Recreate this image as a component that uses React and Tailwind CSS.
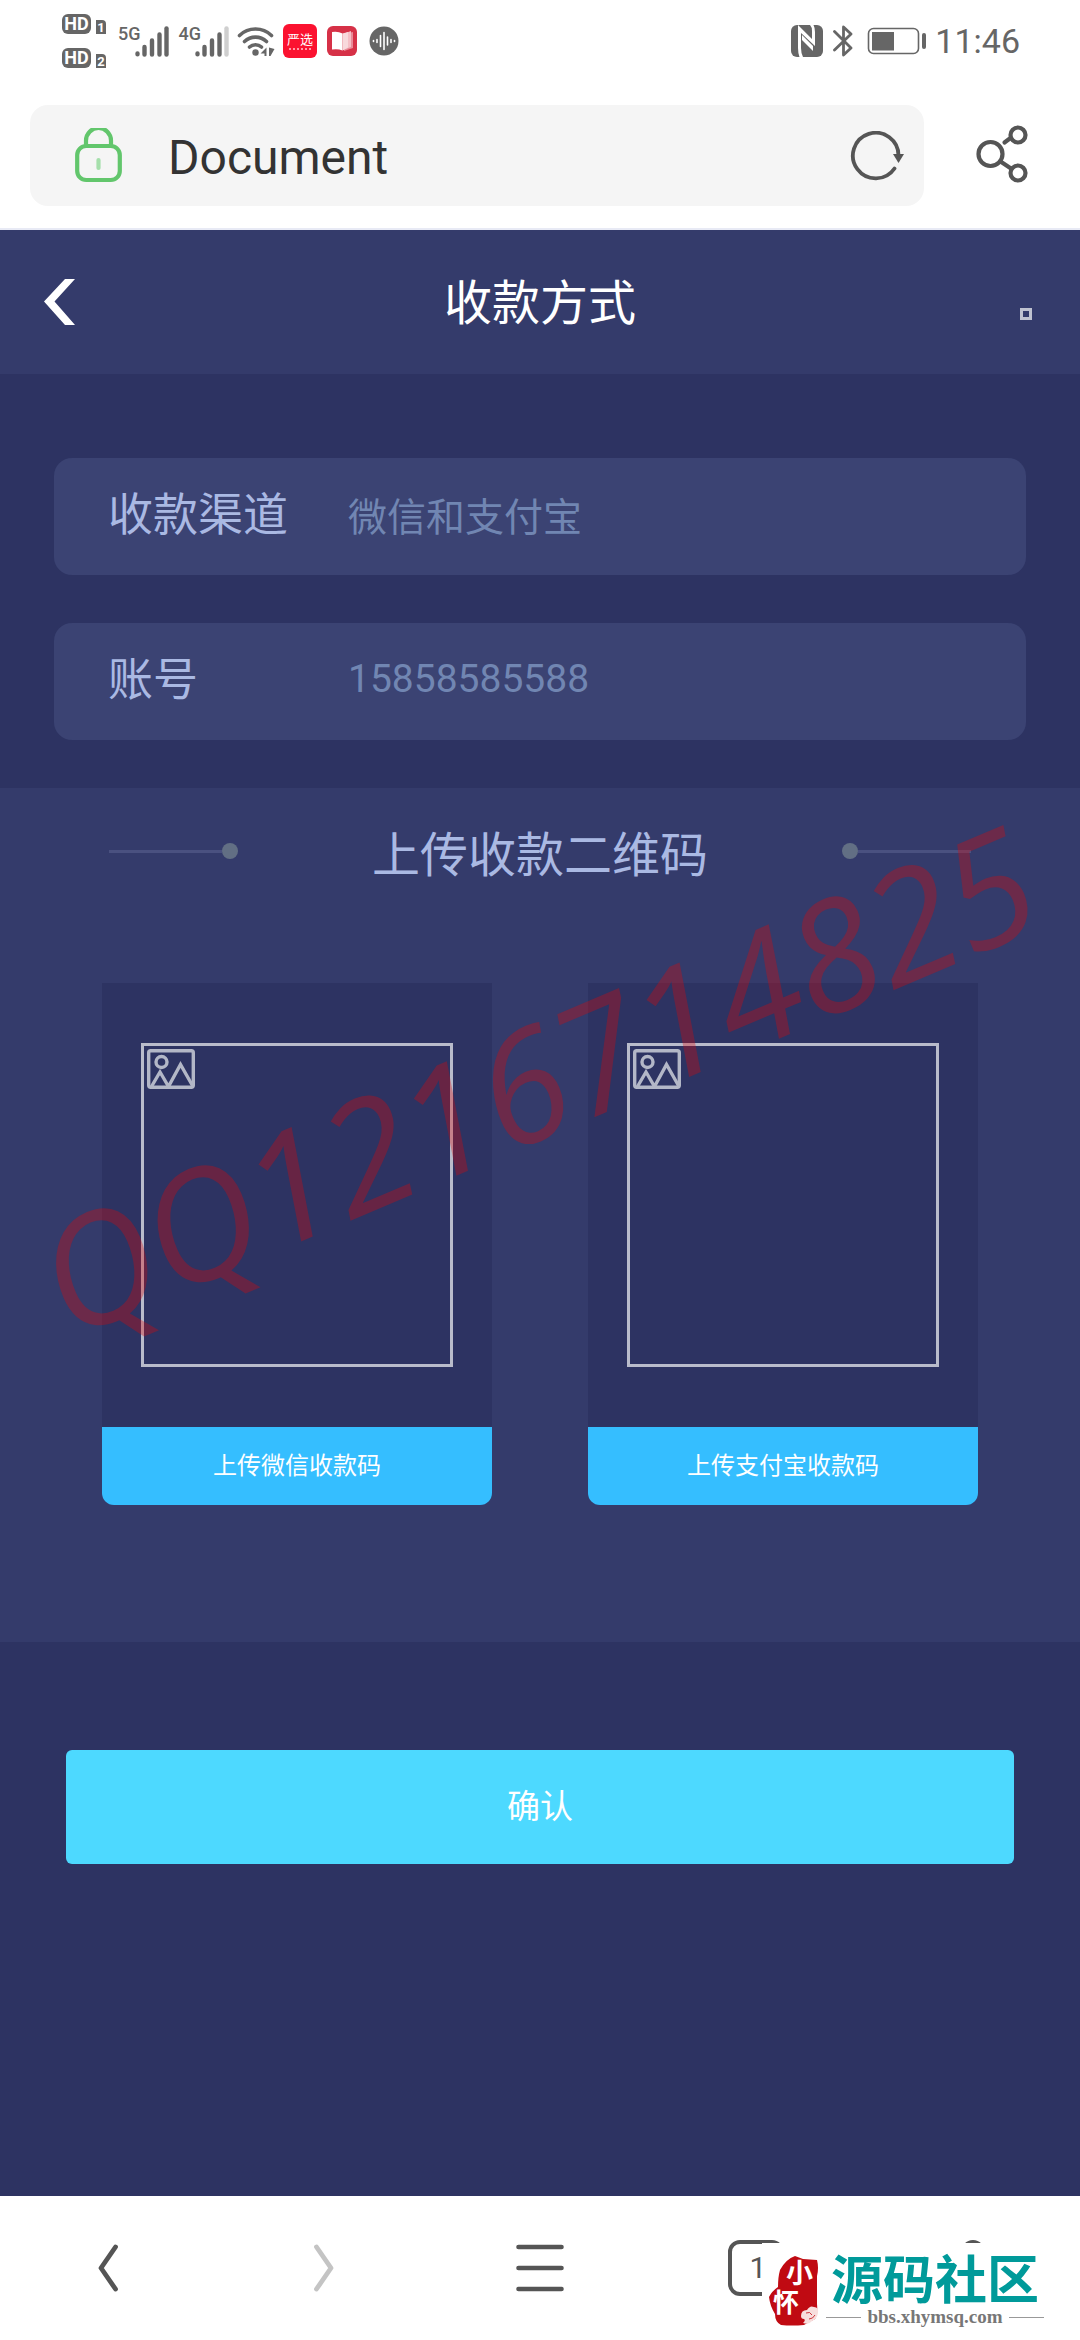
const INK = '#666666'

function SignalBars({ faded = false }) {
  return (
    <svg viewBox="0 0 34 31" className="h-[31px] w-[34px]" stroke={INK} strokeWidth="4.4" strokeLinecap="round">
      <path d="M2.5 27.5v.8M9.5 21v7.5M17 14.5v14M24.5 8.5v20" />
      <path d="M31.5 2.5v26" stroke={faded ? '#cfcfcf' : INK} />
    </svg>
  )
}

function HdBadge({ number }) {
  return (
    <div className="flex items-end gap-[5px]">
      <span className="flex h-5 w-[29px] items-center justify-center rounded-[6px] bg-[#666666] text-[18px] font-bold leading-none text-white">HD</span>
      <span className="flex h-[14px] w-[10px] items-center justify-center rounded-tr-[4px] bg-[#666666] text-[13px] font-bold leading-none text-white">{number}</span>
    </div>
  )
}

function StatusBar() {
  return (
    <div className="flex h-[82px] items-center justify-between bg-white px-[60px] text-[#666666]">
      <div className="flex items-center pl-[2px]">
        <div className="flex flex-col gap-[14px]">
          <HdBadge number="1" />
          <HdBadge number="2" />
        </div>
        <div className="ml-3 flex items-start">
          <span className="text-[18px] font-medium leading-4">5G</span>
          <div className="-ml-[6px]"><SignalBars /></div>
        </div>
        <div className="ml-[10px] flex items-start">
          <span className="text-[18px] font-medium leading-4">4G</span>
          <div className="-ml-[6px]"><SignalBars faded /></div>
        </div>
        <svg viewBox="0 0 38 32" className="ml-2 h-8 w-[38px]" fill="none" stroke={INK} strokeWidth="3.6" strokeLinecap="round">
          <path d="M2.5 10.5a23 23 0 0 1 32 0M7.5 16.5a16 16 0 0 1 22 0M12.5 22a9 9 0 0 1 12 0" />
          <circle cx="18.5" cy="27.5" r="3.2" fill={INK} stroke="none" />
          <path d="M29.5 22.5v8.5h-2v-2.5h-4zM32 22.5l5.5 1.5-4 7H32z" fill={INK} stroke="none" />
        </svg>
        <div className="ml-2 flex h-[34px] w-[34px] flex-col items-center justify-center rounded-[6px] bg-[#fb1230] text-white">
          <span className="text-[13px] leading-4">严选</span>
          <span className="h-[2px] w-[22px] border-b-2 border-dotted border-[#ff9aa8]" />
        </div>
        <svg viewBox="0 0 30 30" className="ml-[10px] h-[30px] w-[30px]">
          <rect width="30" height="30" rx="6" fill="#d63147" />
          <path d="M17 8l9-2v16l-9 3z" fill="#e98b98" />
          <path d="M16 8l8-3v16l-8 3z" fill="#f5bfc6" />
          <path d="M5 6q6-1 10.5 1.5v17Q11 22.5 5 23.5z" fill="#fff" />
          <path d="M15.5 7.5L21 6v15.5l-5.5 3z" fill="#f8d9dc" />
        </svg>
        <svg viewBox="0 0 30 30" className="ml-3 h-[30px] w-[30px]">
          <circle cx="15" cy="15" r="14.5" fill={INK} />
          <path d="M4.5 14.5v1M8 13.5v3M11.5 9.5v11M15 6.5v17M18.5 11v8M22 13.5v3M25.5 14.5v1" stroke="#fff" strokeWidth="1.6" strokeLinecap="round" />
        </svg>
      </div>
      <div className="flex items-center">
        <svg viewBox="0 0 32 32" className="h-8 w-8">
          <rect width="32" height="32" rx="6" fill={INK} />
          <path d="M7 0L21 14V6q0-4-2-6h3.5q1.5 3 1.5 7v14L10 8v15q0 5 2 9H8.500Q7 28 7 23z" fill="#fff" />
          <path d="M11 10l11 11v5L11 15z" fill="#fff" />
        </svg>
        <svg viewBox="0 0 20 32" className="ml-[10px] h-8 w-5" fill="none" stroke={INK} strokeWidth="2.8" strokeLinejoin="round" strokeLinecap="round">
          <path d="M1.5 6.5L18 23l-7.5 7V2L18 9 1.5 25" />
        </svg>
        <svg viewBox="0 0 60 30" className="ml-[14px] h-[30px] w-[60px]">
          <rect x="1.5" y="2.5" width="50" height="25" rx="5" fill="none" stroke={INK} strokeWidth="1.6" />
          <rect x="5" y="6" width="22" height="18.5" fill={INK} />
          <rect x="55" y="7" width="4" height="16" rx="2" fill={INK} />
        </svg>
        <span className="ml-2 text-[34px] leading-10">11:46</span>
      </div>
    </div>
  )
}

function AddressBar() {
  return (
    <div className="flex h-[148px] items-start justify-between border-b-2 border-[#e8eaf5] bg-white pl-[30px] pt-[23px]">
      <div className="flex h-[101px] flex-1 items-center rounded-[18px] bg-[#f5f5f5] pl-[45px] pr-5">
        <svg viewBox="0 0 47 56" className="h-14 w-[47px]" fill="none" stroke="#62c66c" strokeWidth="4.2">
          <rect x="2.2" y="18" width="42.6" height="34" rx="9" />
          <path d="M11 17.5v-5a12.5 12.5 0 0 1 25 0v5" />
          <path d="M23.5 32v8" stroke="#a5dfab" strokeLinecap="round" />
        </svg>
        <span className="ml-[46px] flex-1 pt-1 text-[48px] leading-[56px] text-[#333333]">Document</span>
        <button type="button" aria-label="刷新">
          <svg viewBox="0 0 54 50" className="h-[50px] w-[54px]" fill="none" stroke="#555555" strokeWidth="3.8" strokeLinecap="round">
            <path d="M44.5 37.5A22.8 22.8 0 1 1 48.5 25" />
            <path d="M43 23h11l-5.5 9z" fill="#555555" stroke="none" />
          </svg>
        </button>
      </div>
      <button type="button" aria-label="分享" className="flex h-[98px] w-[156px] items-center justify-center">
        <svg viewBox="0 0 52 58" className="h-[58px] w-[52px]" fill="none" stroke="#555555" strokeWidth="4.2" strokeLinecap="round">
          <circle cx="14.5" cy="29" r="12" />
          <circle cx="42" cy="10" r="7.5" />
          <circle cx="42" cy="48" r="7.5" />
          <path d="M28.5 17.5l6-4.5M24.5 36.5l10.5 7" />
        </svg>
      </button>
    </div>
  )
}

function Field({ id, label, value }) {
  return (
    <div className="flex h-[117px] items-center rounded-[18px] bg-[#3b4373] pb-[6px] pl-[54px]">
      <label htmlFor={id} className="w-[240px] pt-1 text-[45px] leading-[60px] text-[#aab9e3]">{label}</label>
      <input id={id} defaultValue={value} className="h-[60px] min-w-0 flex-1 bg-transparent text-[39px] text-[#7186b2] outline-none" />
    </div>
  )
}

function UploadCard({ label }) {
  return (
    <div className="w-[390px] bg-[#343b6b]">
      <div className="bg-[#2d3362] px-[39px] py-[60px]">
        <div className="h-[324px] border-[3px] border-[#b9bccb] p-[3px]">
          <svg viewBox="0 0 48 40" className="h-10 w-12" fill="none" stroke="#b3b7c7" strokeWidth="3.4">
            <rect x="1.7" y="1.7" width="44.6" height="36.6" rx="2" />
            <circle cx="14.5" cy="13" r="5.5" />
            <path d="M4.5 37.5L13 23l8.5 14.5L33.5 15.5l12.5 22" />
          </svg>
        </div>
      </div>
      <button type="button" className="h-[78px] w-full rounded-b-[12px] bg-[#35beff] text-[24px] text-white">{label}</button>
    </div>
  )
}

function SectionTitle() {
  return (
    <div className="flex items-start justify-between px-[109px]">
      <div className="flex w-[129px] items-center pt-[23px]">
        <span className="h-[3px] flex-1 bg-[#4a5180]" />
        <span className="h-4 w-4 rounded-full bg-[#626f84]" />
      </div>
      <h2 className="pt-1 text-[48px] leading-[64px] text-[#aab9e3]">上传收款二维码</h2>
      <div className="flex w-[129px] items-center pt-[23px]">
        <span className="h-4 w-4 rounded-full bg-[#626f84]" />
        <span className="h-[3px] flex-1 bg-[#4a5180]" />
      </div>
    </div>
  )
}

function SiteLogo() {
  return (
    <div className="absolute bottom-0 right-0 flex h-[97px] w-[318px] items-start bg-white pl-[6px] pt-[12px]">
      <svg viewBox="0 0 52 72" className="h-[72px] w-[52px]">
        <path d="M12 15Q18 4 27 1l8 3 14 1q2 8 0 16v28q1 10-2 15-6 3-11 6-12 1-23 0-6-3-6-11Q2 51 1 42q3-6 9-10 0-10 2-17z" fill="#c00a12" />
        <text x="18" y="28" fontSize="27" fontWeight="700" fill="#fff">小</text>
        <text x="5" y="57" fontSize="26" fontWeight="700" fill="#fff">怀</text>
        <path d="M33 61q0-6 6-6 3-5 7-3 5 0 4 6-1 6-6 8-3 4-9 2 3-3 1-4-3 0-3-3z" fill="#f7dedd" />
        <path d="M38 58q4-2 6 2M41 64q4 0 6-4" fill="none" stroke="#c00a12" strokeWidth=".8" />
      </svg>
      <div className="ml-[6px] flex w-[218px] flex-col items-center">
        <span className="text-[52px] font-bold leading-[54px] text-[#009a9a]">源码社区</span>
        <div className="flex w-full items-center gap-[6px]">
          <span className="h-px flex-1 bg-[#999999]" />
          <span className="font-['Liberation_Serif',serif] text-[19px] font-bold leading-4 text-[#777777]">bbs.xhymsq.com</span>
          <span className="h-px flex-1 bg-[#999999]" />
        </div>
      </div>
    </div>
  )
}

function BottomNav() {
  const icon = 'h-[60px] w-[60px]'
  return (
    <nav className="relative grid h-[144px] grid-cols-5 items-center justify-items-center bg-white">
      <button type="button" aria-label="后退">
        <svg viewBox="0 0 60 60" className={icon} fill="none" stroke="#555555" strokeWidth="4.8" strokeLinecap="round" strokeLinejoin="round"><path d="M37.5 9L23 30l14.5 21" /></svg>
      </button>
      <button type="button" aria-label="前进">
        <svg viewBox="0 0 60 60" className={icon} fill="none" stroke="#c4c4c4" strokeWidth="4.8" strokeLinecap="round" strokeLinejoin="round"><path d="M22.5 9L37 30 22.5 51" /></svg>
      </button>
      <button type="button" aria-label="菜单">
        <svg viewBox="0 0 60 60" className={icon} stroke="#555555" strokeWidth="4.6" strokeLinecap="round"><path d="M8.5 9h43M8.5 30h43M8.5 51h43" /></svg>
      </button>
      <button type="button" aria-label="标签页" className="flex h-14 w-14 items-center justify-center rounded-[12px] border-4 border-[#555555] pl-1 text-[30px] leading-none text-[#555555]">1</button>
      <button type="button" aria-label="我的">
        <svg viewBox="0 0 60 60" className={icon} fill="none" stroke="#555555" strokeWidth="4"><circle cx="31" cy="14" r="10" /><path d="M8 56q2-24 22-24t22 24" /></svg>
      </button>
      <SiteLogo />
    </nav>
  )
}

export default function App() {
  return (
    <div className="flex min-h-screen flex-col overflow-hidden bg-[#2d3362] font-[Roboto,'Noto_Sans_CJK_SC',sans-serif]">
      <StatusBar />
      <AddressBar />
      <header className="flex h-[144px] items-center justify-between bg-[#343b6b] px-11">
        <button type="button" aria-label="返回" className="w-12">
          <svg viewBox="0 0 32 46" className="h-[46px] w-8"><path d="M21 0h10L10.5 22.5 31 46H21L0 22.5z" fill="#fff" /></svg>
        </button>
        <h1 className="pt-1 text-[48px] leading-[64px] text-white">收款方式</h1>
        <div className="flex w-12 justify-end pr-1 pt-6"><span className="h-3 w-3 border-[3px] border-[#bfc2d0]" /></div>
      </header>
      <main className="flex flex-1 flex-col">
        <form className="flex flex-col gap-12 px-[54px] pb-12 pt-[84px]">
          <Field id="channel" label="收款渠道" value="微信和支付宝" />
          <Field id="account" label="账号" value="15858585588" />
        </form>
        <section className="relative bg-[#343b6b] pb-[137px] pt-8">
          <SectionTitle />
          <div className="mt-[95px] flex justify-between px-[102px]">
            <UploadCard label="上传微信收款码" />
            <UploadCard label="上传支付宝收款码" />
          </div>
          <div className="pointer-events-none absolute inset-x-0 top-[200px] flex justify-center pr-2">
            <span className="-rotate-23 whitespace-nowrap font-['Open_Sans',sans-serif] text-[153px] font-medium italic leading-[180px] text-[#e10708] opacity-[.32]">QQ1216714825</span>
          </div>
        </section>
        <div className="px-[66px] pt-[108px]">
          <button type="button" className="h-[114px] w-full rounded-[6px] bg-[#4dd9ff] text-[33px] text-white">确认</button>
        </div>
      </main>
      <BottomNav />
    </div>
  )
}
